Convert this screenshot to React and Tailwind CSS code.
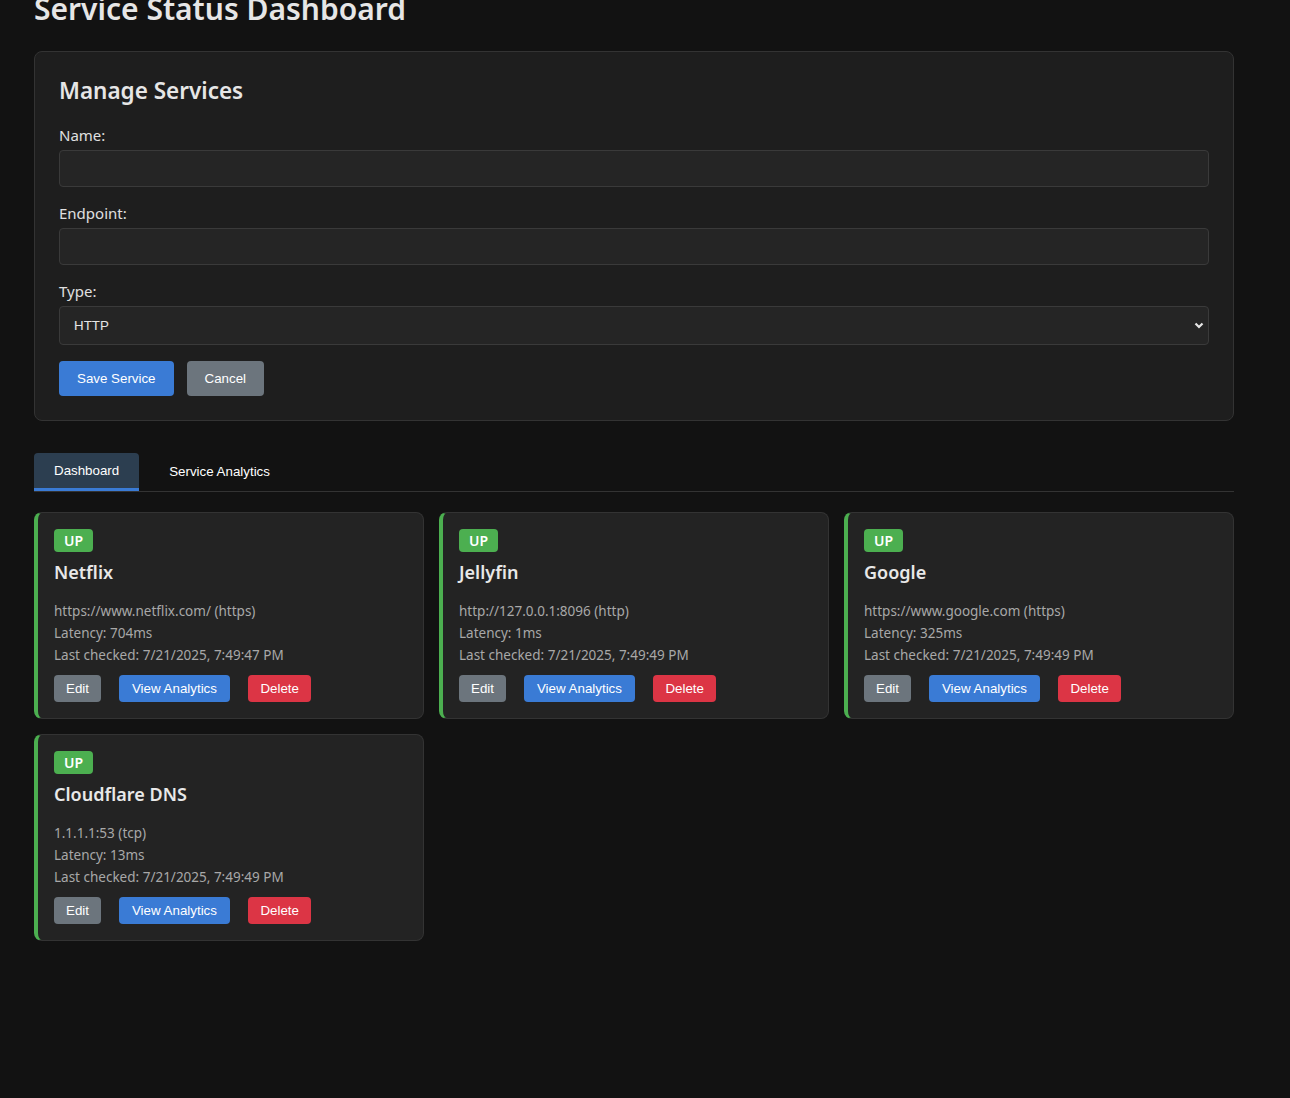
import React, { useState } from 'react';

const services = [
  { name: 'Netflix', endpoint: 'https://www.netflix.com/', type: 'https', latency: '704ms', checked: '7/21/2025, 7:49:47 PM' },
  { name: 'Jellyfin', endpoint: 'http://127.0.0.1:8096', type: 'http', latency: '1ms', checked: '7/21/2025, 7:49:49 PM' },
  { name: 'Google', endpoint: 'https://www.google.com', type: 'https', latency: '325ms', checked: '7/21/2025, 7:49:49 PM' },
  { name: 'Cloudflare DNS', endpoint: '1.1.1.1:53', type: 'tcp', latency: '13ms', checked: '7/21/2025, 7:49:49 PM' },
];

const btn = "font-['Liberation_Sans',Arial,sans-serif] text-[13.33px] text-white rounded";

const ServiceCard = ({ s }) => (
  <div className="bg-[#232323] border border-[#333] border-l-4 border-l-[#4caf50] rounded-lg pl-4 pr-5 pt-4 pb-4">
    <div className="flex">
      <span className="bg-[#4caf50] text-white text-[14px] font-semibold leading-[13px] px-[10px] py-[5px] rounded">UP</span>
    </div>
    <h3 className="text-[18px] font-semibold text-[#e8e8e8] mt-[8px] leading-[24px]">{s.name}</h3>
    <div className="mt-[16px] text-[13.5px] leading-[22px] text-[#a8a8a8]">
      <p>{s.endpoint} ({s.type})</p>
      <p>Latency: {s.latency}</p>
      <p>Last checked: {s.checked}</p>
    </div>
    <div className="flex gap-[18px] mt-[9px]">
      <button className={`${btn} bg-[#6c757d] h-[27px] px-3`}>Edit</button>
      <button className={`${btn} bg-[#3a7bd5] h-[27px] px-[13px]`}>View Analytics</button>
      <button className={`${btn} bg-[#dc3545] h-[27px] px-[12.5px]`}>Delete</button>
    </div>
  </div>
);

const App = () => {
  const [tab, setTab] = useState('dashboard');

  return (
    <div className="min-h-screen bg-[#121212] text-[#e0e0e0] font-['Noto_Sans',sans-serif] overflow-hidden">
      <div className="w-[1200px] ml-[34px] pb-[158px]">
        <h1 className="text-[30px] font-semibold leading-[38px] mt-[-10px] text-[#e6e6e6]">Service Status Dashboard</h1>

        {/* Manage form */}
        <div className="mt-[23px] bg-[#1e1e1e] border border-[#333] rounded-lg px-6 pt-[23px] pb-6">
          <h2 className="text-[22.5px] font-semibold leading-[32px] text-[#e6e6e6]">Manage Services</h2>
          <label className="block text-[15px] mt-[17px] leading-[22px]">Name:</label>
          <input className="block w-full h-[37px] mt-[4px] bg-[#252525] border border-[#3a3a3a] rounded" />
          <label className="block text-[15px] mt-[15px] leading-[22px]">Endpoint:</label>
          <input className="block w-full h-[37px] mt-[4px] bg-[#252525] border border-[#3a3a3a] rounded" />
          <label className="block text-[15px] mt-[15px] leading-[22px]">Type:</label>
          <div className="relative mt-[4px]">
            <select className="block w-full h-[39px] appearance-none bg-[#252525] border border-[#3a3a3a] rounded px-[14px] text-[13.33px] font-['Liberation_Sans',Arial,sans-serif] text-[#e6e6e6]">
              <option>HTTP</option>
              <option>TCP</option>
            </select>
            <svg className="absolute right-[5px] top-[16px] pointer-events-none" width="10" height="8" viewBox="0 0 10 8">
              <path d="M1.5 1.5l3.5 3.5 3.5-3.5" fill="none" stroke="#e6e6e6" strokeWidth="2.2" />
            </svg>
          </div>
          <div className="flex gap-[13px] mt-[16px]">
            <button className={`${btn} bg-[#3a7bd5] h-[35px] px-[18px]`}>Save Service</button>
            <button className={`${btn} bg-[#6c757d] h-[35px] px-[18px]`}>Cancel</button>
          </div>
        </div>

        {/* Tabs */}
        <div className="mt-[32px] flex border-b border-[#333]">
          <button
            onClick={() => setTab('dashboard')}
            className={`${btn} h-[38px] px-5 rounded-b-none text-[#dcdcdc] ${tab === 'dashboard' ? 'bg-[#2c3e50] border-b-[3px] border-[#3a7bd5]' : ''}`}
          >
            Dashboard
          </button>
          <button
            onClick={() => setTab('analytics')}
            className={`${btn} h-[38px] px-[30px] rounded-b-none text-[#e0e0e0] ${tab === 'analytics' ? 'bg-[#2c3e50] border-b-[3px] border-[#3a7bd5]' : ''}`}
          >
            Service Analytics
          </button>
        </div>

        {/* Cards */}
        <div className="grid grid-cols-3 gap-x-[15px] gap-y-[15px] mt-[20px]">
          {services.map((s) => (
            <ServiceCard key={s.name} s={s} />
          ))}
        </div>
      </div>
    </div>
  );
};

export default App;
